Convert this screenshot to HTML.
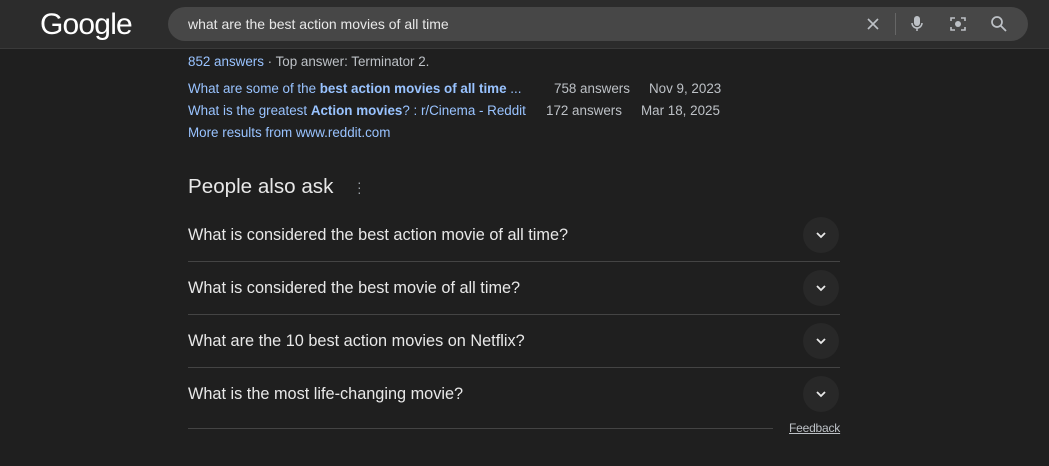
<!DOCTYPE html><html><head><style>
body{margin:0;width:1049px;height:466px;background:#1f1f1f;font-family:"Liberation Sans",sans-serif;overflow:hidden;position:relative;color:#e8e8e8}
.hdr{position:absolute;left:0;top:0;width:1049px;height:48px;background:#2c2c2c;border-bottom:1px solid #3a3a3a}
.logo{position:absolute;left:40px;top:8px;font-size:30px;color:#fff;letter-spacing:-0.8px}
.sb{position:absolute;left:168px;top:7px;width:860px;height:34px;border-radius:17px;background:#474747}
.sb .q{position:absolute;left:20px;top:9px;font-size:14px;color:#e8e8e8}
.a{position:absolute;font-size:13.4px;color:#99c3ff;white-space:nowrap}
.g{color:#bdc1c6}
.h{position:absolute;left:188px;top:175px;font-size:20.6px;color:#e8e8e8}
.qq{position:absolute;left:188px;font-size:16.3px;color:#e8e8e8}
.ln{position:absolute;left:188px;width:652px;height:1px;background:#444}
.cv{position:absolute;left:803px;width:36px;height:36px;border-radius:50%;background:#282828}
.cv svg{position:absolute;left:10px;top:10px}
</style></head><body>
<div class="hdr">
<div class="logo">Google</div>
<div class="sb"><div class="q">what are the best action movies of all time</div>
<svg style="position:absolute;left:698px;top:10px" width="14" height="14"><path d="M2 2L12 12M12 2L2 12" stroke="#bdc1c6" stroke-width="1.6"/></svg>
<div style="position:absolute;left:727px;top:6px;width:1px;height:22px;background:#666"></div>
<svg style="position:absolute;left:742px;top:8px" width="14" height="18"><rect x="4" y="1" width="6" height="10" rx="3" fill="#bdc1c6"/><path d="M2 8a5 5 0 0 0 10 0M7 13v3" stroke="#bdc1c6" stroke-width="1.5" fill="none"/></svg>
<svg style="position:absolute;left:781px;top:8px" width="18" height="18"><path d="M2 6V3h4M12 3h4v3M16 12v3h-4M6 15H2v-3" stroke="#bdc1c6" stroke-width="1.6" fill="none"/><circle cx="9" cy="9" r="3" fill="#bdc1c6"/></svg>
<svg style="position:absolute;left:822px;top:8px" width="18" height="18"><circle cx="7" cy="7" r="5" stroke="#bdc1c6" stroke-width="1.7" fill="none"/><path d="M11 11L16 16" stroke="#bdc1c6" stroke-width="1.8"/></svg>
</div></div>
<div class="a" style="left:188px;top:54px">852 answers <span class="g">· Top answer: Terminator 2.</span></div>
<div class="a" style="left:188px;top:81px">What are some of the <b>best action movies of all time</b> ...</div>
<div class="a g" style="left:554px;top:81px">758 answers</div><div class="a g" style="left:649px;top:81px">Nov 9, 2023</div>
<div class="a" style="left:188px;top:103px">What is the greatest <b>Action movies</b>? : r/Cinema - Reddit</div>
<div class="a g" style="left:546px;top:103px">172 answers</div><div class="a g" style="left:641px;top:103px">Mar 18, 2025</div>
<div class="a" style="left:188px;top:125px">More results from www.reddit.com</div>
<div class="h">People also ask</div>
<div style="position:absolute;left:357px;top:180px;color:#9aa0a6;font-size:14px;line-height:5px">·<br>·<br>·</div>
<div class="qq" style="top:226px">What is considered the best action movie of all time?</div>
<div class="qq" style="top:279px">What is considered the best movie of all time?</div>
<div class="qq" style="top:332px">What are the 10 best action movies on Netflix?</div>
<div class="qq" style="top:385px">What is the most life-changing movie?</div>
<div class="ln" style="top:261px"></div><div class="ln" style="top:314px"></div><div class="ln" style="top:367px"></div>
<div class="ln" style="top:428px;width:585px"></div>
<div class="cv" style="top:217px"><svg width="16" height="16"><path d="M4 6l4 4 4-4" stroke="#e8e8e8" stroke-width="1.8" fill="none"/></svg></div>
<div class="cv" style="top:270px"><svg width="16" height="16"><path d="M4 6l4 4 4-4" stroke="#e8e8e8" stroke-width="1.8" fill="none"/></svg></div>
<div class="cv" style="top:323px"><svg width="16" height="16"><path d="M4 6l4 4 4-4" stroke="#e8e8e8" stroke-width="1.8" fill="none"/></svg></div>
<div class="cv" style="top:376px"><svg width="16" height="16"><path d="M4 6l4 4 4-4" stroke="#e8e8e8" stroke-width="1.8" fill="none"/></svg></div>
<div style="position:absolute;left:789px;top:421px;font-size:12px;color:#bdc1c6;text-decoration:underline;letter-spacing:-0.2px">Feedback</div>
</body></html>
